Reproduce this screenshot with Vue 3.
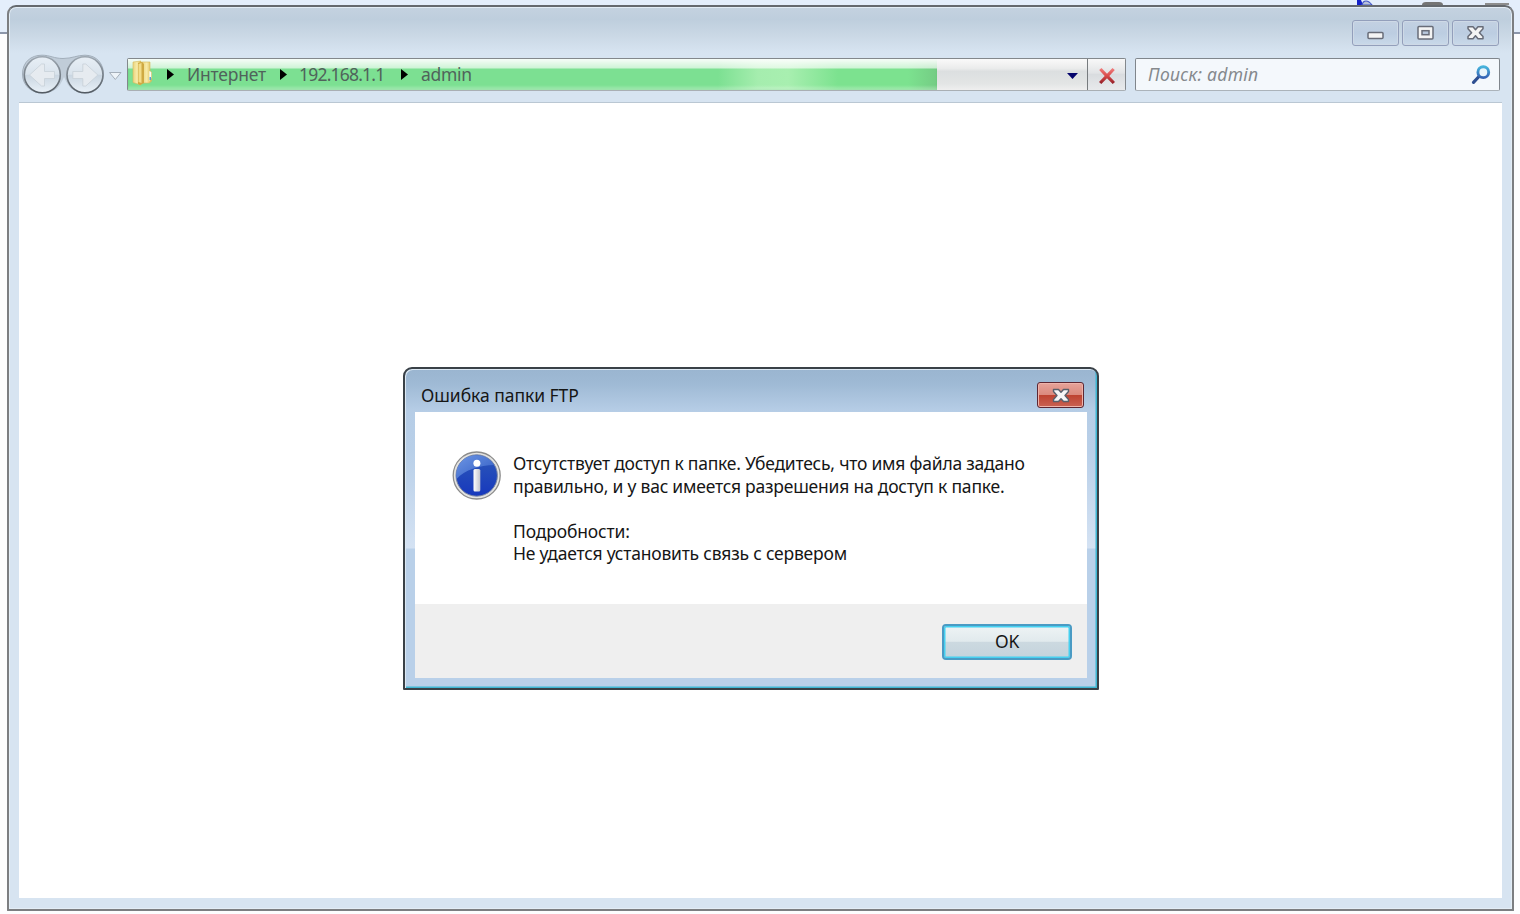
<script setup>
const crumbs = ['Интернет', '192.168.1.1', 'admin']
</script>

<template>
  <div class="desktop">
    <svg class="behind" width="180" height="6" viewBox="1340 0 180 6">
      <path d="M1357 0h4l2 5h-6z" fill="#1420c8" />
      <path d="M1362 5q1-4 4-4t6 4z" fill="#b9c2d8" stroke="#4054c8" stroke-width="1.2" />
      <path d="M1422 5q0-3 4-3h13q4 0 4 3z" fill="#747474" />
      <path d="M1485 4h24" stroke="#8d8d8d" stroke-width="2" />
    </svg>
    <main class="window">
      <header class="titlebar">
        <button class="ctl" aria-label="Minimize">
          <svg width="45" height="24" viewBox="0 0 45 24"><rect x="15" y="11.5" width="15" height="6" rx="1" fill="#f4f4f4" stroke="#686c78" stroke-width="1.5" /></svg>
        </button>
        <button class="ctl" aria-label="Maximize">
          <svg width="45" height="24" viewBox="0 0 45 24"><rect x="15" y="5.500" width="15" height="12.500" rx="1" fill="#f4f4f4" stroke="#686c78" stroke-width="1.5" /><rect x="19" y="9.700" width="7" height="4" fill="#b8c8dc" stroke="#686c78" stroke-width="1.5" /></svg>
        </button>
        <button class="ctl" aria-label="Close">
          <svg width="45" height="24" viewBox="0 0 45 24"><path d="M15 5.800h5l2.500 2.900L25 5.800h5v2L26.400 11.700 30 15.500v2.200h-5l-2.500-3-2.500 3h-5v-2.200l3.600-3.800L15 7.800z" fill="#f4f4f4" stroke="#686c78" stroke-width="1.5" stroke-linejoin="round" /></svg>
        </button>
      </header>
      <nav class="toolbar">
        <svg class="nav" width="104" height="42" viewBox="20 53 104 42">
          <defs>
            <linearGradient id="disc" x1="0" y1="0" x2="0" y2="1">
              <stop offset="0" stop-color="#e8eff6" /><stop offset=".48" stop-color="#d9e3ec" />
              <stop offset=".52" stop-color="#cbd7e2" /><stop offset="1" stop-color="#e9f1f8" />
            </linearGradient>
            <linearGradient id="rim" x1="0" y1="0" x2="0" y2="1">
              <stop offset="0" stop-color="#9da7b1" /><stop offset="1" stop-color="#535b63" />
            </linearGradient>
          </defs>
          <path d="M42 55.200c8 0 12 3.300 21 3.300s14-3.300 22-3.300c12 0 19 9 18.500 20C101 88 95 93 85 93S68 86 64 81C60 87 52 93 42 93S22.500 86 22.500 74 31 55.200 42 55.200z" fill="#c0ccd8" stroke="#a3afbb" stroke-width="1" />
          <path d="M64 77C60 87 53 94 42 94S24 87 22 80v15h82V80c-2 8-9 14-19 14S68 87 64 77z" fill="#d7e4f1" />
          <circle cx="42.300" cy="74.800" r="18" fill="url(#disc)" stroke="url(#rim)" stroke-width="1.600" />
          <circle cx="85" cy="74.800" r="18" fill="url(#disc)" stroke="url(#rim)" stroke-width="1.600" />
          <path d="M29.500 75L41.500 64h3v7.500h10v7h-10V86h-3z" fill="#e6ebf0" stroke="#c8d0d8" stroke-width=".8" />
          <path d="M97.800 75L85.800 64h-3v7.500h-10v7h10V86h3z" fill="#e6ebf0" stroke="#c8d0d8" stroke-width=".8" />
          <path d="M109.500 72.500h11.500l-5.700 7z" fill="#edf3f8" stroke="#a5afba" stroke-width="1" />
        </svg>
        <div class="address">
          <div class="path">
            <div class="progress"><i></i></div>
            <svg class="folder" width="22" height="26" viewBox="131 60 22 26">
              <defs><linearGradient id="fold" x1="0" x2="1"><stop offset="0" stop-color="#ead57f" /><stop offset=".5" stop-color="#f8eba9" /><stop offset="1" stop-color="#d9b84d" /></linearGradient></defs>
              <path d="M133 62l8-1v24l-8-2.500z" fill="url(#fold)" stroke="#d7b95a" stroke-width=".6" />
              <path d="M142 62h8v9l1.500 1v9l-2 2h-7.500z" fill="url(#fold)" stroke="#d7b95a" stroke-width=".6" />
              <path d="M138 63l4-1 2 2v19l-4 2-2-1z" fill="#cfa942" /><path d="M138.500 64l3-1v20l-3-1z" fill="#f2dd8a" />
              <path d="M149.300 71l2 1v6l-2 3z" fill="#fafcf3" /><path d="M149.500 77h1.500v3h-1.500z" fill="#5aa1d2" />
            </svg>
            <span v-for="(c, i) in crumbs" :key="c" class="crumb" :class="'c' + i">
              <svg width="7" height="11" viewBox="0 0 7 11"><path d="M0 0l7 5.500L0 11z" fill="#000" /></svg>
              <b>{{ c }}</b>
            </span>
            <svg class="drop" width="11" height="6" viewBox="0 0 11 6"><path d="M0 0h11L5.500 6z" fill="#04046c" /></svg>
          </div>
          <button class="stop" aria-label="Stop">
            <svg width="18" height="18" viewBox="0 0 18 18">
              <defs><linearGradient id="red" x1="0" y1="0" x2="0" y2="1"><stop offset="0" stop-color="#f28080" /><stop offset=".5" stop-color="#d84a4a" /><stop offset="1" stop-color="#8e1c24" /></linearGradient></defs>
              <path d="M1.200 3L3.500 1 9 6.700 14.500 1l2.300 2L11.300 9l5.700 6-2.300 2L9 11.300 3.300 17 1 15 6.700 9z" fill="url(#red)" />
            </svg>
          </button>
        </div>
        <div class="search">
          <em>Поиск: admin</em>
          <svg width="20" height="20" viewBox="0 0 20 20">
            <defs><linearGradient id="lens" x1="0" y1="0" x2="0" y2="1"><stop offset="0" stop-color="#46b3dc" /><stop offset="1" stop-color="#3562b4" /></linearGradient></defs>
            <path d="M8 11.500L2.500 17.300" stroke="#2e4f91" stroke-width="3.200" stroke-linecap="round" />
            <circle cx="12.300" cy="7.200" r="5.400" fill="#e9f5fb" stroke="url(#lens)" stroke-width="2.900" />
          </svg>
        </div>
      </nav>
      <section class="content"></section>
    </main>

    <section class="dialog" role="dialog">
      <header class="dhead">
        <h1>Ошибка папки FTP</h1>
        <button class="dclose" aria-label="Close">
          <svg width="18" height="15" viewBox="0 0 18 15"><path d="M1.500 1.500h5L9 4.300l2.500-2.800h5v2L13 7.500l3.500 4v2h-5L9 10.700l-2.500 2.800h-5v-2l3.500-4-3.500-4z" fill="#f6f6f6" stroke="#58606c" stroke-width="1.400" stroke-linejoin="round" /></svg>
        </button>
      </header>
      <div class="dbody">
        <div class="message">
          <svg class="info" width="50" height="50" viewBox="0 0 50 50">
            <defs>
              <linearGradient id="blue" x1="0" y1="0" x2="0" y2="1"><stop offset="0" stop-color="#2c58b8" /><stop offset="1" stop-color="#1738bd" /></linearGradient>
              <linearGradient id="shine" x1="0" y1="0" x2="1" y2="1"><stop offset="0" stop-color="#6d96e4" /><stop offset="1" stop-color="#2f5ac2" /></linearGradient>
              <linearGradient id="stem" x1="0" x2="1"><stop offset="0" stop-color="#fff" /><stop offset="1" stop-color="#c2c4cc" /></linearGradient>
            </defs>
            <circle cx="24.700" cy="25.500" r="23.500" fill="#e3e3e1" stroke="#8b8b8b" stroke-width="1.300" />
            <circle cx="24.700" cy="25.500" r="20.700" fill="url(#blue)" stroke="#7b87a4" stroke-width="1" />
            <path d="M4.500 29C2.700 15.500 11.700 5.300 24.700 5.300c8 0 14 4 17.500 9.700C27.700 15.500 12.700 19.500 4.500 29z" fill="url(#shine)" />
            <circle cx="24.900" cy="13.300" r="3.500" fill="#fff" />
            <rect x="21.500" y="19" width="6.800" height="22.500" rx="1.500" fill="url(#stem)" />
          </svg>
          <div class="text">
            <p class="l1">Отсутствует доступ к папке. Убедитесь, что имя файла задано</p>
            <p class="l2">правильно, и у вас имеется разрешения на доступ к папке.</p>
            <p class="l3">Подробности:</p>
            <p class="l4">Не удается установить связь с сервером</p>
          </div>
        </div>
        <footer><button class="ok">OK</button></footer>
      </div>
    </section>
  </div>
</template>

<style>
body { overflow: hidden; }
</style>

<style scoped>
* { box-sizing: border-box; }
.desktop { position: relative; width: 1520px; height: 914px; padding: 5px 6px 3px 7px; background: linear-gradient(#e4eefb 0 32px, #8c96aa 32px 34px, #fdfdfe 34px); font-family: "Noto Sans", "Open Sans", sans-serif; font-size: 17.5px; color: #161616; }
button { padding: 0; margin: 0; font: inherit; color: inherit; display: flex; align-items: center; justify-content: center; }
.behind { position: absolute; left: 1340px; top: 0; }
.window { position: relative; display: flex; flex-direction: column; width: 1507px; height: 906px; border: 2px solid #7c7e81; border-top-color: #65696e; border-radius: 9px 9px 1px 1px; background: linear-gradient(#c4d2e0 0, #becedd 12px, #c9d7e4 27px, #d7e4f1 46px); padding: 0 10px 11px; box-shadow: inset 0 0 0 1px #e3edf6; }
.titlebar { height: 46px; display: flex; justify-content: flex-end; gap: 3px; padding: 13px 3px 0 0; }
.ctl { width: 47px; height: 26px; border: 1.5px solid #939fbb; border-radius: 3px; background: linear-gradient(#c3d1e2, #bccde1 50%, #c9d9e9); box-shadow: inset 0 0 0 1px #ced9e6; }
.toolbar { height: 49px; display: flex; align-items: flex-start; padding-left: 1px; }
.nav { flex: none; margin-right: 3px; }
.address { margin-top: 5px; width: 999px; height: 33px; display: flex; border: 1.5px solid #83888c; border-bottom-color: #a9afb4; border-radius: 2px; }
.path { position: relative; width: 960px; display: flex; align-items: center; background: linear-gradient(#fafafa, #ebecec 30%, #dcdfe0 40%, #e3e5e5 80%, #efefef); border-right: 1.5px solid #777b7e; }
.progress { position: absolute; inset: 0 auto 0 0; width: 809px; background: linear-gradient(90deg, #7ce092 0 590px, #a5edae 630px, #a8efb0 660px, #7ce28f 710px 780px, #74cc84); box-shadow: inset 0 0 2px #65c478; }
.progress i { display: block; height: 100%; background: linear-gradient(#fffffff0, #ffffffa0 9px, transparent 10px 26px, #ffffff50); }
.folder { position: relative; margin: -3px 0 0 3px; }
.crumb { position: relative; display: flex; align-items: center; }
.crumb b { font-weight: 400; color: #50635b; font-size: 17.5px; line-height: 24px; margin-top: -2px; white-space: nowrap; }
.crumb svg { flex: none; margin-right: 13px; }
.c0 { margin-left: 14px; width: 113px; }
.c1 { width: 121px; }
.c0 b { letter-spacing: -.2px; }
.c1 b { letter-spacing: -.8px; margin-left: -1px; }
.c2 b { letter-spacing: -.3px; }
.drop { margin: 2px 9px 0 auto; }
.stop { flex: 1; border: 0; background: linear-gradient(#f8f8f8, #e2e4e6 45%, #d9dcdf 50%, #e8eaec); padding-top: 3px; }
.search { margin: 5px 0 0 9px; width: 365px; height: 33px; display: flex; align-items: center; justify-content: space-between; border: 1.5px solid #80868c; border-bottom-color: #abb3ba; border-radius: 2px; background: #f4f8fc; padding: 0 8px 0 12px; }
.search em { color: #85898d; line-height: 24px; margin-top: -2px; font-size: 17.5px; letter-spacing: .25px; white-space: nowrap; }
.content { flex: 1; background: #fff; border-top: 1.5px solid #bac7d3; }
.dialog { position: absolute; left: 403px; top: 367px; width: 696px; height: 323px; border: 2px solid #3a4147; border-radius: 9px 9px 1px 1px; background: linear-gradient(#9ab5d0 0, #9fbad5 15px, #b6cde6 42px, #b8cfe8 80px, #d4e2f3 179px, #b9d0e9 180px); box-shadow: inset 1px 1px 0 #dce8f3, inset -1.5px -1.5px 0 #3fb6d2; padding: 0 10px 10px; }
.dhead { height: 43px; display: flex; justify-content: space-between; padding: 13px 3px 0 6px; }
.dhead h1 { margin: 1px 0 0; font-size: 17.5px; font-weight: 400; line-height: 24px; white-space: nowrap; letter-spacing: -.05px; }
.dclose { width: 47px; height: 26px; border: 1.5px solid #5d2733; border-radius: 3px; background: linear-gradient(#e6a39a, #db8a7e 48%, #bd4230 50%, #ca6253); box-shadow: inset 0 0 0 1px #eeb3aa; }
.dbody { height: 266px; background: #efefef; }
.message { height: 192px; background: #fff; display: flex; padding: 38px 0 0 37px; }
.info { flex: none; }
.text { margin: 2.4px 0 0 11px; }
.text p { margin: 0; line-height: 22.5px; white-space: nowrap; letter-spacing: -.22px; }
.text .l3 { margin-top: 22.500px; letter-spacing: -.15px; }
footer { display: flex; justify-content: flex-end; padding: 20px 15px 0; }
.ok { width: 130px; height: 36px; border: 2px solid #4a9bc4; border-radius: 4px; background: linear-gradient(#eef3f5, #e1eaed 48%, #ccd9e0 50%, #c3d3dc); box-shadow: inset 0 0 0 1.5px #45d0f0; font-size: 17.5px; letter-spacing: -.3px; padding-bottom: 2px; }
</style>
